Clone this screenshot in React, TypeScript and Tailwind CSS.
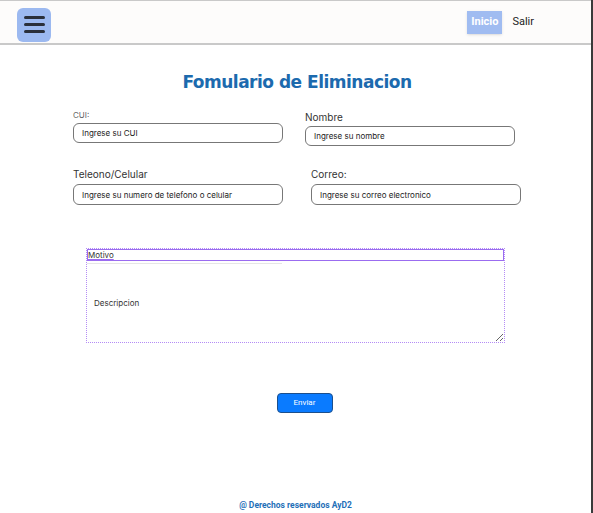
import React from 'react';

const App: React.FC = () => {
  return (
    <div className="relative w-[593px] h-[513px] bg-white border-r-2 border-[#3a3a3a] overflow-hidden font-['Inter',sans-serif] text-[#1f1f1f]">
      {/* Header */}
      <header className="h-[45px] bg-[#fdfcfb] border-t border-b-2 border-[#c9c9c9] flex items-center justify-between pl-[17px] pr-[57px]">
        <button className="w-[34px] h-[34px] rounded-md bg-[#9cb9f0] flex flex-col items-center justify-center gap-[4px] mt-[5px]">
          <span className="block w-[21px] h-[3px] rounded-full bg-[#2a2f3a]" />
          <span className="block w-[21px] h-[3px] rounded-full bg-[#2a2f3a]" />
          <span className="block w-[21px] h-[3px] rounded-full bg-[#2a2f3a]" />
        </button>
        <nav className="flex items-center gap-[10px]">
          <a className="h-[23px] px-[4px] flex items-center bg-[#a0bcf1] text-white text-[11px] font-bold font-['Roboto',sans-serif] shadow-sm">
            Inicio
          </a>
          <a className="text-[11px] text-[#222] font-['Roboto',sans-serif]">Salir</a>
        </nav>
      </header>

      <main className="flex flex-col">
        <h1 className="mt-[25px] ml-[3px] text-center text-[17px] leading-[24px] font-bold text-[#1c6aae] tracking-[-0.5px] font-['DejaVu_Sans',sans-serif]">
          Fomulario de Eliminacion
        </h1>

        {/* Row 1 */}
        <div className="flex items-start pl-[73px] mt-[16px]">
          <div className="w-[210px]">
            <label className="block text-[8px] text-[#666] leading-[10px]">CUI:</label>
            <input
              className="block mt-[3px] w-[210px] h-[20px] rounded-md border border-[#777] px-[8px] text-[8px] placeholder:text-[#222]"
              placeholder="Ingrese su CUI"
            />
          </div>
          <div className="w-[210px] ml-[22px]">
            <label className="block text-[10px] text-[#333] leading-[12px] mt-[1px]">Nombre</label>
            <input
              className="block mt-[3px] w-[210px] h-[20px] rounded-md border border-[#777] px-[8px] text-[8px] placeholder:text-[#222]"
              placeholder="Ingrese su nombre"
            />
          </div>
        </div>

        {/* Row 2 */}
        <div className="flex items-start pl-[73px] mt-[22px]">
          <div className="w-[210px]">
            <label className="block text-[10px] text-[#333] leading-[12px]">Teleono/Celular</label>
            <input
              className="block mt-[4px] w-[210px] h-[21px] rounded-md border border-[#777] px-[8px] text-[8px] placeholder:text-[#222]"
              placeholder="Ingrese su numero de telefono o celular"
            />
          </div>
          <div className="w-[210px] ml-[28px]">
            <label className="block text-[10px] text-[#333] leading-[12px]">Correo:</label>
            <input
              className="block mt-[4px] w-[210px] h-[21px] rounded-md border border-[#777] px-[8px] text-[8px] placeholder:text-[#222]"
              placeholder="Ingrese su correo electronico"
            />
          </div>
        </div>

        {/* Motivo / Descripcion */}
        <div className="ml-[86px] mt-[43px] w-[419px] border border-dotted border-[#b48cf5] flex flex-col">
          <div className="h-[12px] border border-[#9b6cf0] flex items-end">
            <span className="text-[8px] leading-[9px] text-[#333] underline decoration-[#9b6cf0]">Motivo</span>
          </div>
          <div className="mt-[2px] w-[195px] h-px bg-[#e6e6e6]" />
          <textarea
            className="block h-[78px] w-full resize-y px-[7px] pt-[33px] text-[8px] placeholder:text-[#333] outline-none"
            placeholder="Descripcion"
          />
        </div>

        <div className="flex justify-center mt-[50px]">
          <button className="ml-[18px] w-[56px] h-[20px] rounded-[4px] bg-[#0a7bff] border border-[#1c4f8c] text-white text-[8px] font-['Roboto',sans-serif]">
            Enviar
          </button>
        </div>
      </main>

      <footer className="absolute bottom-[1px] left-0 right-0 text-center text-[8.5px] font-bold text-[#1f6fb8] font-['Roboto',sans-serif]">
        @ Derechos reservados AyD2
      </footer>
    </div>
  );
};

export default App;
